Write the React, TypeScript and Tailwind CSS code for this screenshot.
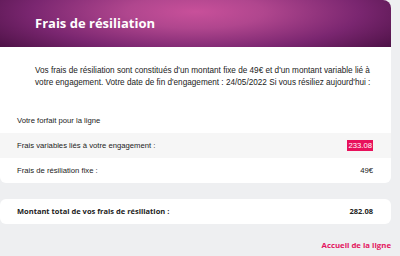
export default function App() {
  return (
    <div className="w-[400px] h-[256px] overflow-hidden bg-[#eeeff1] pr-[9px] font-['Liberation_Sans',Arial,sans-serif]">
      {/* main card */}
      <div className="bg-white rounded-tr-[8px] rounded-b-[6px] overflow-hidden">
        <div className="h-[47px] flex items-center pl-[35px] bg-[radial-gradient(ellipse_70%_140%_at_50%_25%,#c8509a_0%,#b0468e_25%,#7a2670_60%,#3d0a37_100%)]">
          <h1 className="text-[13px] font-bold text-white font-['Open_Sans',sans-serif]">
            Frais de résiliation
          </h1>
        </div>
        <p className="pl-[35px] pr-[20px] pt-[18px] text-[8.2px] leading-[12px] text-[#222]">
          Vos frais de résiliation sont constitués d'un montant fixe de 49€ et d'un montant variable lié à
          <br />
          votre engagement. Votre date de fin d'engagement : 24/05/2022 Si vous résiliez aujourd'hui :
        </p>
        <div className="mt-[19px] text-[7.7px] text-[#222]">
          <div className="h-[25px] flex items-center px-[17px]">Votre forfait pour la ligne</div>
          <div className="h-[25px] flex items-center justify-between pl-[17px] pr-[18px] bg-[#f6f6f6]">
            <span>Frais variables liés à votre engagement :</span>
            <span className="bg-[#e8115b] text-white px-[1px] leading-[11px]">233.08</span>
          </div>
          <div className="h-[25px] flex items-center justify-between pl-[17px] pr-[18px]">
            <span>Frais de résiliation fixe :</span>
            <span>49€</span>
          </div>
        </div>
      </div>

      {/* total card */}
      <div className="mt-[16px] h-[25px] bg-white rounded-[6px] flex items-center justify-between pl-[17px] pr-[18px] text-[7.5px] font-bold text-[#222] font-['Open_Sans',sans-serif]">
        <span>Montant total de vos frais de résiliation :</span>
        <span>282.08</span>
      </div>

      <div className="mt-[16px] flex justify-end">
        <a className="text-[7.8px] font-bold text-[#e3155f] font-['Open_Sans',sans-serif]">Accueil de la ligne</a>
      </div>
    </div>
  );
}
